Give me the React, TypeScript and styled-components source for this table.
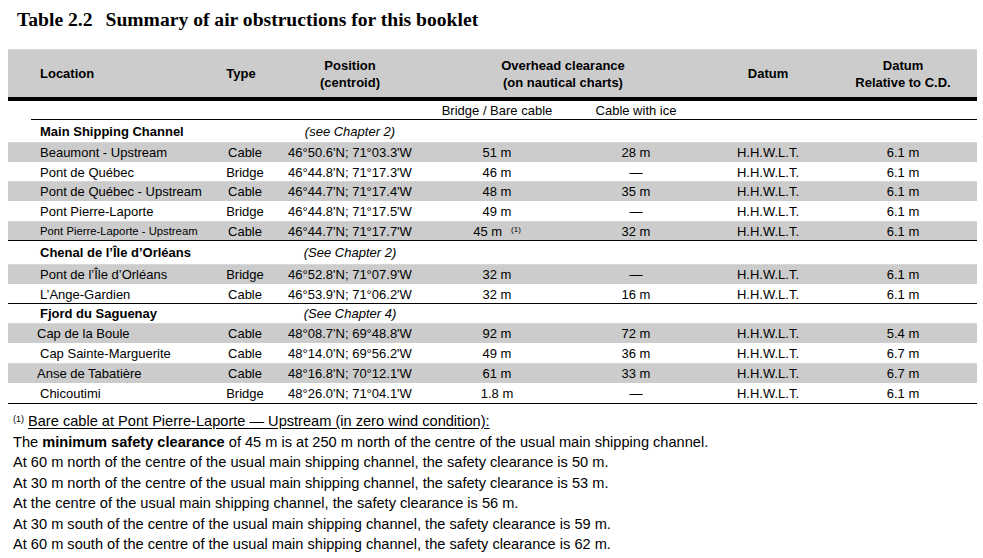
import React from 'react';
import styled, { createGlobalStyle } from 'styled-components';

const Global = createGlobalStyle`
  html, body { margin: 0; padding: 0; background: #ffffff; }
  body { font-family: "Liberation Sans", Arial, sans-serif; color: #000; }
`;

const COLS = '206px 62px 148px 146px 132px 132px 1fr';

const Page = styled.div`
  width: 983px;
  height: 558px;
  overflow: hidden;
  box-sizing: border-box;
`;

const Title = styled.h1`
  margin: 0;
  box-sizing: border-box;
  height: 49px;
  padding: 9px 0 0 17px;
  font-family: "Liberation Serif", "Times New Roman", serif;
  font-size: 19.6px;
  line-height: 22px;
  font-weight: bold;
  white-space: nowrap;
`;

const Gap = styled.span`
  display: inline-block;
  width: 13px;
`;

const Table = styled.div`
  margin-left: 8px;
  width: 969px;
  font-size: 13px;
`;

const HeaderBand = styled.div`
  display: grid;
  grid-template-columns: ${COLS};
  height: 48px;
  background: #cccccc;
  border-top: 1px dotted #e4e4e4;
  box-sizing: border-box;
  font-weight: bold;
  line-height: 17px;
  align-items: center;
`;

const HeadCell = styled.div<{ $align?: 'left' | 'center'; $pl?: number; $pr?: number; $span?: number }>`
  text-align: ${(p) => p.$align ?? 'center'};
  padding-left: ${(p) => p.$pl ?? 0}px;
  padding-right: ${(p) => p.$pr ?? 0}px;
  grid-column: span ${(p) => p.$span ?? 1};
`;

const ThickBar = styled.div`
  height: 4px;
  background: #000;
`;

const SubHeader = styled.div`
  display: grid;
  grid-template-columns: ${COLS};
  height: 18px;
  align-items: center;
  line-height: 15px;
`;

const SubCell = styled.div<{ $col: number }>`
  grid-column: ${(p) => p.$col};
  text-align: center;
  white-space: nowrap;
`;

const Rule = styled.div<{ $indent?: number }>`
  height: 1px;
  background: #000;
  margin-left: ${(p) => p.$indent ?? 0}px;
`;

const SectionRow = styled.div<{ $h: number }>`
  display: grid;
  grid-template-columns: ${COLS};
  height: ${(p) => p.$h}px;
  align-items: center;
  line-height: 15px;
`;

const SectionName = styled.div`
  grid-column: 1 / span 2;
  padding-left: 32px;
  font-weight: bold;
  white-space: nowrap;
`;

const SectionNote = styled.div`
  grid-column: 3;
  text-align: center;
  font-style: italic;
  white-space: nowrap;
`;

const DataRow = styled.div<{ $h: number; $gray: boolean }>`
  display: grid;
  grid-template-columns: ${COLS};
  height: ${(p) => p.$h}px;
  align-items: center;
  line-height: 15px;
  box-sizing: border-box;
  background: ${(p) => (p.$gray ? '#cccccc' : 'transparent')};
  border-top: 1px dotted ${(p) => (p.$gray ? '#e2e2e2' : 'transparent')};
`;

const LocCell = styled.div<{ $pl: number; $small?: boolean }>`
  padding-left: ${(p) => p.$pl}px;
  font-size: ${(p) => (p.$small ? '11.3px' : '13px')};
  white-space: nowrap;
`;

const Cell = styled.div<{ $pr?: number }>`
  text-align: center;
  white-space: nowrap;
  padding-right: ${(p) => p.$pr ?? 0}px;
`;

const Sup = styled.sup`
  font-size: 8px;
  vertical-align: 4px;
  line-height: 0;
  margin-left: 9px;
`;

const Footnote = styled.div`
  padding: 7px 0 0 13px;
  font-size: 14.6px;
  line-height: 20.5px;
  white-space: nowrap;
`;

const FootLine = styled.div``;

const FootMark = styled.sup`
  font-size: 9px;
  vertical-align: 4px;
  line-height: 0;
  margin-right: 4px;
`;

const Underlined = styled.span`
  text-decoration: underline;
  text-underline-offset: 2px;
`;

type Row = {
  loc: string;
  type: string;
  pos: string;
  bare: string;
  ice: string;
  rel: string;
  pl?: number;
  small?: boolean;
  note?: boolean;
};

type Section = { name: string; note: string; h: number; rowH: number[]; rows: Row[] };

const DASH = '\u2014';

const sections: Section[] = [
  {
    name: 'Main Shipping Channel',
    note: '(see Chapter 2)',
    h: 22,
    rowH: [20, 19, 20, 20, 19],
    rows: [
      { loc: 'Beaumont - Upstream', type: 'Cable', pos: "46°50.6'N; 71°03.3'W", bare: '51 m', ice: '28 m', rel: '6.1 m' },
      { loc: 'Pont de Québec', type: 'Bridge', pos: "46°44.8'N; 71°17.3'W", bare: '46 m', ice: DASH, rel: '6.1 m' },
      { loc: 'Pont de Québec - Upstream', type: 'Cable', pos: "46°44.7'N; 71°17.4'W", bare: '48 m', ice: '35 m', rel: '6.1 m' },
      { loc: 'Pont Pierre-Laporte', type: 'Bridge', pos: "46°44.8'N; 71°17.5'W", bare: '49 m', ice: DASH, rel: '6.1 m' },
      { loc: 'Pont Pierre-Laporte - Upstream', type: 'Cable', pos: "46°44.7'N; 71°17.7'W", bare: '45 m', ice: '32 m', rel: '6.1 m', small: true, note: true },
    ],
  },
  {
    name: 'Chenal de l\u2019Île d\u2019Orléans',
    note: '(See Chapter 2)',
    h: 23,
    rowH: [20, 19],
    rows: [
      { loc: 'Pont de l\u2019Île d\u2019Orléans', type: 'Bridge', pos: "46°52.8'N; 71°07.9'W", bare: '32 m', ice: DASH, rel: '6.1 m' },
      { loc: 'L\u2019Ange-Gardien', type: 'Cable', pos: "46°53.9'N; 71°06.2'W", bare: '32 m', ice: '16 m', rel: '6.1 m' },
    ],
  },
  {
    name: 'Fjord du Saguenay',
    note: '(See Chapter 4)',
    h: 19,
    rowH: [20, 20, 20, 20],
    rows: [
      { loc: 'Cap de la Boule', type: 'Cable', pos: "48°08.7'N; 69°48.8'W", bare: '92 m', ice: '72 m', rel: '5.4 m', pl: 29 },
      { loc: 'Cap Sainte-Marguerite', type: 'Cable', pos: "48°14.0'N; 69°56.2'W", bare: '49 m', ice: '36 m', rel: '6.7 m' },
      { loc: 'Anse de Tabatière', type: 'Cable', pos: "48°16.8'N; 70°12.1'W", bare: '61 m', ice: '33 m', rel: '6.7 m', pl: 29 },
      { loc: 'Chicoutimi', type: 'Bridge', pos: "48°26.0'N; 71°04.1'W", bare: '1.8 m', ice: DASH, rel: '6.1 m' },
    ],
  },
];

const footLines = [
  'At 60 m north of the centre of the usual main shipping channel, the safety clearance is 50 m.',
  'At 30 m north of the centre of the usual main shipping channel, the safety clearance is 53 m.',
  'At the centre of the usual main shipping channel, the safety clearance is 56 m.',
  'At 30 m south of the centre of the usual main shipping channel, the safety clearance is 59 m.',
  'At 60 m south of the centre of the usual main shipping channel, the safety clearance is 62 m.',
];

export default function App() {
  return (
    <Page>
      <Global />
      <Title>
        Table 2.2<Gap />Summary of air obstructions for this booklet
      </Title>
      <Table>
        <HeaderBand>
          <HeadCell $align="left" $pl={32}>Location</HeadCell>
          <HeadCell $pr={8}>Type</HeadCell>
          <HeadCell>
            Position
            <br />
            (centroid)
          </HeadCell>
          <HeadCell $span={2}>
            Overhead clearance
            <br />
            (on nautical charts)
          </HeadCell>
          <HeadCell>Datum</HeadCell>
          <HeadCell $pr={5}>
            Datum
            <br />
            Relative to C.D.
          </HeadCell>
        </HeaderBand>
        <ThickBar />
        <SubHeader>
          <SubCell $col={4}>Bridge / Bare cable</SubCell>
          <SubCell $col={5}>Cable with ice</SubCell>
        </SubHeader>
        <Rule $indent={23} />
        {sections.map((s) => (
          <React.Fragment key={s.name}>
            <SectionRow $h={s.h}>
              <SectionName>{s.name}</SectionName>
              <SectionNote>{s.note}</SectionNote>
            </SectionRow>
            {s.rows.map((r, i) => (
              <DataRow key={r.loc} $h={s.rowH[i]} $gray={i % 2 === 0}>
                <LocCell $pl={r.pl ?? 32} $small={r.small}>{r.loc}</LocCell>
                <Cell>{r.type}</Cell>
                <Cell>{r.pos}</Cell>
                <Cell>
                  {r.bare}
                  {r.note && <Sup>(1)</Sup>}
                </Cell>
                <Cell>{r.ice}</Cell>
                <Cell>H.H.W.L.T.</Cell>
                <Cell $pr={5}>{r.rel}</Cell>
              </DataRow>
            ))}
            <Rule />
          </React.Fragment>
        ))}
      </Table>
      <Footnote>
        <FootLine>
          <FootMark>(1)</FootMark>
          <Underlined>Bare cable at Pont Pierre-Laporte {DASH} Upstream (in zero wind condition):</Underlined>
        </FootLine>
        <FootLine>
          The <b>minimum safety clearance</b> of 45 m is at 250 m north of the centre of the usual main shipping channel.
        </FootLine>
        {footLines.map((t) => (
          <FootLine key={t}>{t}</FootLine>
        ))}
      </Footnote>
    </Page>
  );
}
